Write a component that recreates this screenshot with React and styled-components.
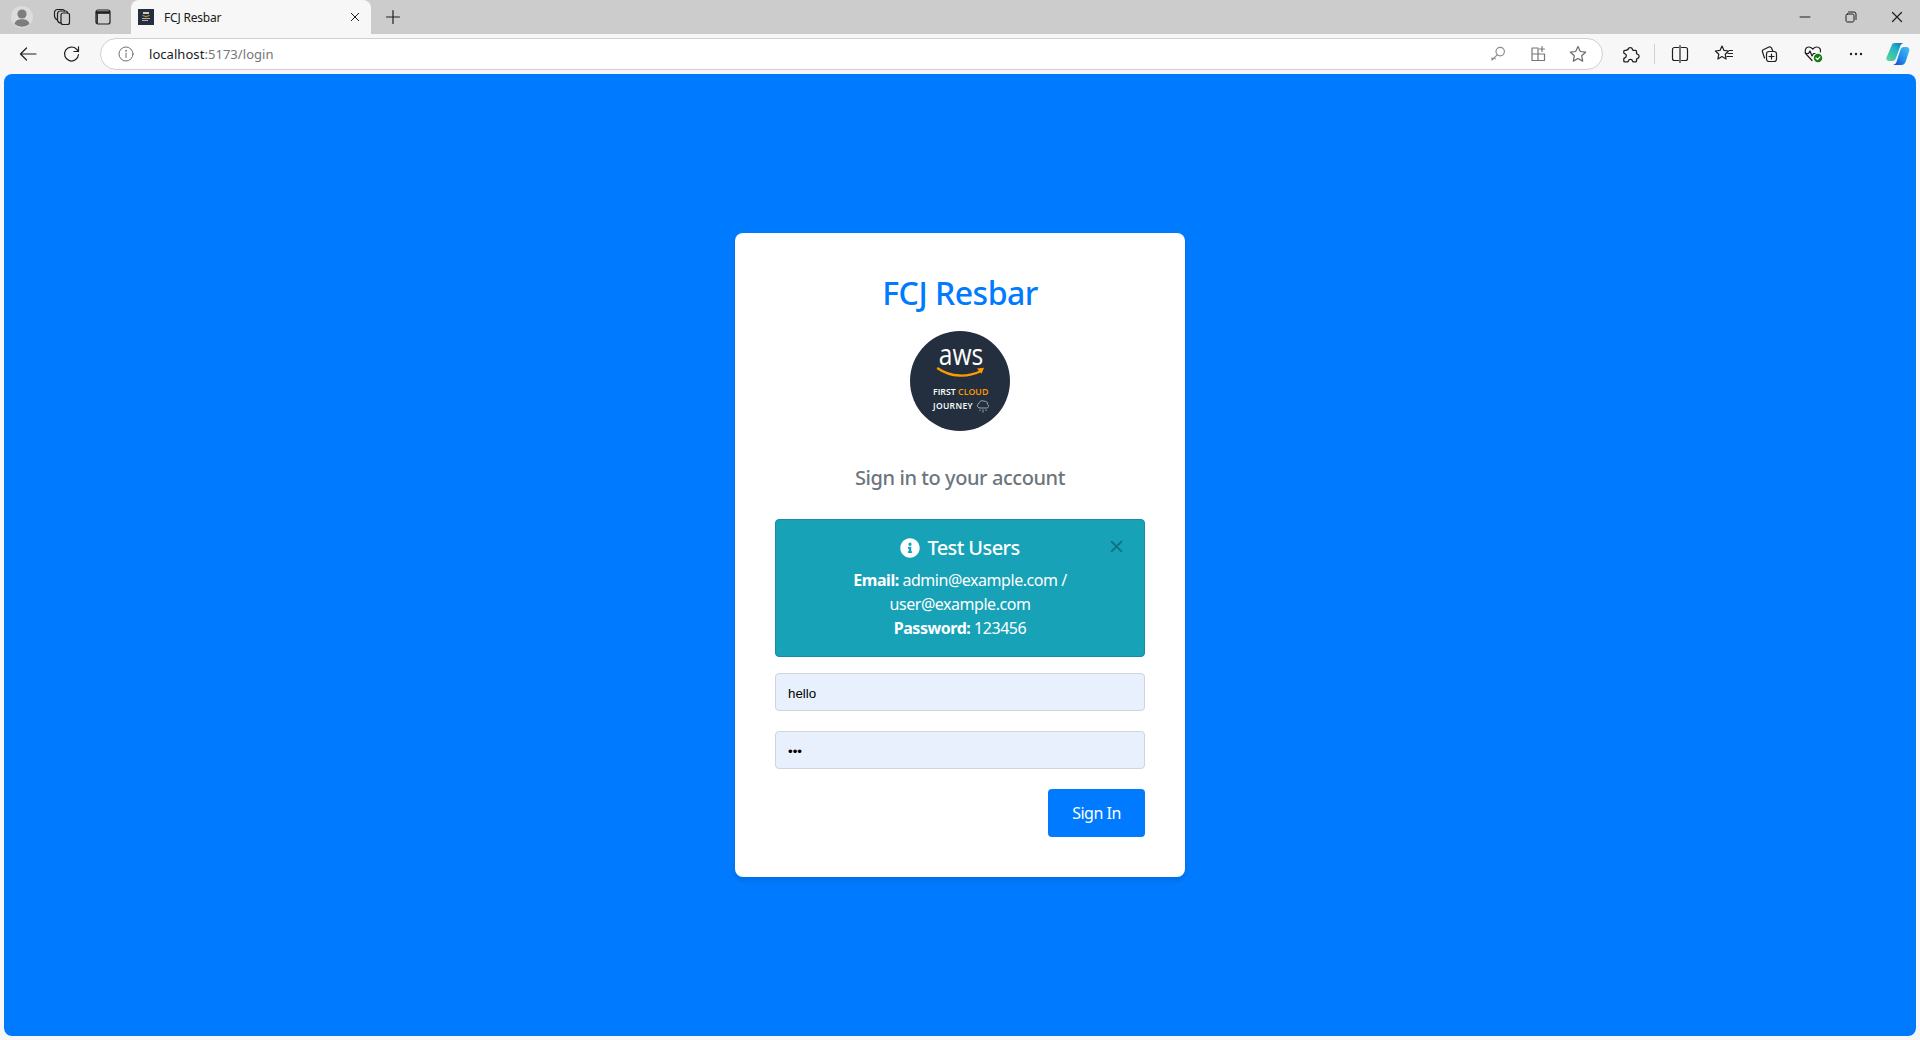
import React from "react";
import styled, { createGlobalStyle } from "styled-components";

const GlobalStyle = createGlobalStyle`
    * { box-sizing: border-box; }
    html, body { margin: 0; padding: 0; height: 100%; }
    body { font-family: "Noto Sans", "Open Sans", sans-serif; overflow: hidden; }
`;

const Page = styled.div`
    width: 1920px;
    height: 1040px;
    display: flex;
    flex-direction: column;
    background-color: #f7f7f7;
`;

const TabStrip = styled.div`
    height: 34px;
    display: flex;
    align-items: stretch;
    padding-left: 4px;
    background-color: #cccccc;
`;

const Tab = styled.div`
    width: 240px;
    margin-left: 9px;
    display: flex;
    align-items: center;
    padding: 0 11px 0 7px;
    background-color: #f7f7f7;
    border-radius: 8px 8px 0 0;
`;

const TabTitle = styled.span`
    flex: 1;
    margin-left: 10px;
    font-size: 12px;
    letter-spacing: -0.2px;
    color: #1a1a1a;
`;

const Slot = styled.div`
    width: ${({ $w }) => $w || 40}px;
    flex-shrink: 0;
    display: flex;
    align-items: center;
    justify-content: center;
`;

const Spacer = styled.div`
    flex: 1;
`;

const Toolbar = styled.div`
    height: 40px;
    display: flex;
    align-items: center;
    padding: 0 4px 0 8px;
`;

const AddressBar = styled.div`
    width: 1503px;
    height: 32px;
    margin: 0 8px 0 8px;
    padding: 0 4px 0 8px;
    display: flex;
    align-items: center;
    background-color: #ffffff;
    border: 1px solid #d0d0d0;
    border-radius: 16px;
`;

const Url = styled.span`
    margin-left: 6px;
    flex: 1;
    font-size: 13px;
    letter-spacing: 0.05px;
    color: #767676;

    b {
        font-weight: 400;
        color: #1a1a1a;
    }
`;

const Divider = styled.div`
    width: 1px;
    height: 20px;
    margin: 0 3px;
    background-color: #d0d0d0;
`;

const Content = styled.main`
    flex: 1;
    margin: 0 4px 4px;
    display: flex;
    align-items: center;
    justify-content: center;
    background-color: #007bff;
    border-radius: 8px;
`;

const Card = styled.div`
    width: 450px;
    padding: 40px;
    display: flex;
    flex-direction: column;
    background-color: #ffffff;
    border-radius: 8px;
    box-shadow: 0 4px 6px rgba(0, 0, 0, 0.1);
`;

const Title = styled.h1`
    margin: 0 0 20px;
    height: 38px;
    font-size: 32px;
    line-height: 40px;
    font-weight: 500;
    letter-spacing: -0.5px;
    text-align: center;
    color: #007bff;
`;

const LogoWrap = styled.div`
    display: flex;
    justify-content: center;
    margin-bottom: 35px;
`;

const Subtitle = styled.h2`
    margin: 0 0 29px;
    font-size: 20px;
    line-height: 24px;
    font-weight: 500;
    letter-spacing: -0.43px;
    text-align: center;
    color: #6c757d;
`;

const Alert = styled.div`
    position: relative;
    padding: 16px;
    margin-bottom: 16px;
    text-align: center;
    color: #ffffff;
    background-color: #17a2b8;
    border: 1px solid #148ea1;
    border-radius: 4px;
`;

const AlertHeading = styled.h4`
    margin: 0 0 8px;
    display: flex;
    align-items: center;
    justify-content: center;
    gap: 7px;
    font-size: 20px;
    line-height: 24px;
    font-weight: 500;
    letter-spacing: -0.6px;
`;

const AlertLine = styled.div`
    font-size: 16px;
    line-height: 24px;
    letter-spacing: -0.46px;

    strong {
        font-weight: 700;
    }
`;

const CloseButton = styled.button`
    position: absolute;
    top: 14px;
    right: 16px;
    width: 24px;
    height: 24px;
    padding: 0;
    display: flex;
    align-items: center;
    justify-content: center;
    background: transparent;
    border: 0;
    opacity: 0.5;
`;

const Input = styled.input`
    display: block;
    width: 100%;
    height: 38px;
    margin-bottom: 20px;
    padding: 2px 12px 0;
    font-family: "Liberation Sans", sans-serif;
    font-size: 13.33px;
    color: #000000;
    background-color: #e8f0fe;
    border: 1px solid #ced4da;
    border-radius: 4px;
    outline: none;
`;

const Actions = styled.div`
    display: flex;
    justify-content: flex-end;
`;

const SubmitButton = styled.button`
    width: 97px;
    height: 48px;
    padding: 0;
    font-family: inherit;
    font-size: 16px;
    letter-spacing: -0.5px;
    color: #ffffff;
    background-color: #007bff;
    border: 0;
    border-radius: 4px;
`;

const Icon = ({ size = 20, vb = 20, children, color = "#1f1f1f", width = 1.2 }) => (
    <svg
        width={size}
        height={size}
        viewBox={`0 0 ${vb} ${vb}`}
        fill="none"
        stroke={color}
        strokeWidth={width}
        strokeLinecap="round"
        strokeLinejoin="round"
    >
        {children}
    </svg>
);

const ProfileIcon = () => (
    <svg width="22" height="22" viewBox="0 0 22 22">
        <circle cx="11" cy="11" r="11" fill="#dcdcdc" />
        <circle cx="11" cy="8" r="4.6" fill="#7d7d7d" />
        <path d="M3.6 18c.6-3.4 3.6-4.8 7.4-4.8s6.8 1.4 7.4 4.8a11 11 0 0 1-14.8 0z" fill="#7d7d7d" />
    </svg>
);

const CollectionsTabIcon = () => (
    <Icon>
        <rect x="9" y="6" width="8.5" height="11.5" rx="2" />
        <path d="M9 16c-2 0-3-1-3.5-2.5V7a3 3 0 0 1 3-3h5a2 2 0 0 1 2 2" />
        <path d="M5.5 13c-2-1-3-2-3-4V6a3 3 0 0 1 3-3.5h5a2 2 0 0 1 2 1.5" />
    </Icon>
);

const VerticalTabsIcon = () => (
    <Icon>
        <rect x="3" y="3" width="14" height="14" rx="2" />
        <path d="M3 5.5h14" strokeWidth="2.6" strokeLinecap="butt" />
        <path d="M4.2 6v10.5" strokeWidth="1.4" strokeLinecap="butt" />
    </Icon>
);

const FavIcon = () => (
    <svg width="16" height="16" viewBox="0 0 16 16">
        <rect width="16" height="16" fill="#232f3e" />
        <rect x="5" y="3" width="6" height="2" fill="#c9ccd0" />
        <path d="M4.5 6.5q3.5 2 7 0" stroke="#ff9900" strokeWidth="1" fill="none" />
        <rect x="4" y="9" width="8" height="1" fill="#aeb3ba" />
        <rect x="4" y="11" width="6" height="1" fill="#aeb3ba" />
    </svg>
);

const CloseIcon = ({ size = 12, color = "#1f1f1f", width = 1.2 }) => (
    <Icon size={size} vb={12} color={color} width={width}>
        <path d="M1.5 1.5l9 9M10.5 1.5l-9 9" />
    </Icon>
);

const PlusIcon = () => (
    <Icon size={16} vb={16}>
        <path d="M8 1.5v13M1.5 8h13" />
    </Icon>
);

const BackIcon = () => (
    <Icon>
        <path d="M18 10H2.5M8.5 4l-6 6 6 6" />
    </Icon>
);

const RefreshIcon = () => (
    <Icon>
        <path d="M16.5 10.5a7 7 0 1 1-1.8-5.2L16.5 7.5M16.5 2.8v4.7h-4.6" />
    </Icon>
);

const InfoOutlineIcon = () => (
    <Icon size={16} vb={16} color="#6f6f6f" width={1}>
        <circle cx="8" cy="8" r="7" />
        <path d="M8 7v4.5" />
        <circle cx="8" cy="4.8" r=".4" />
    </Icon>
);

const KeyIcon = () => (
    <Icon size={16} vb={16} color="#8c8c8c">
        <circle cx="10.2" cy="5.6" r="4.2" />
        <path d="M7.2 8.8 2 14M2 14v-2.2M4.2 11.8l1 1" />
    </Icon>
);

const AppsIcon = () => (
    <Icon size={18} vb={18} color="#767676">
        <path d="M9 3H3v12.5h12.5V9H3M9 3v12.5M13 1.5v5M10.5 4h5" />
    </Icon>
);

const StarIcon = () => (
    <Icon size={18} vb={18} color="#6b6b6b">
        <path d="M9 1.6l2.3 4.9 5.3.7-3.9 3.6 1 5.3L9 13.5l-4.7 2.6 1-5.3-3.9-3.6 5.3-.7z" />
    </Icon>
);

const PuzzleIcon = () => (
    <Icon size={17} vb={17} width={1.3}>
        <path d="M5 3.5a2.3 2.3 0 0 1 4.5 0c0 .5.4.8.8.8h2.2a1 1 0 0 1 1 1v2c0 .5.3.8.8.8a2.3 2.3 0 0 1 0 4.5c-.5 0-.8.3-.8.8v1.5a1 1 0 0 1-1 1h-2c-.5 0-.8-.3-.9-.8a2.2 2.2 0 0 0-4.3 0c-.1.5-.4.8-.9.8H1.800a1 1 0 0 1-1-1v-2c0-.5.3-.8.8-.9a2.2 2.2 0 0 0 0-4.3c-.5-.1-.8-.4-.8-.9V5.300a1 1 0 0 1 1-1h1.600c.5 0 .8-.3.8-.8z" />
    </Icon>
);

const SplitIcon = () => (
    <Icon>
        <path d="M8.5 3.5h-4a2 2 0 0 0-2 2v9a2 2 0 0 0 2 2h4M11.5 3.5h4a2 2 0 0 1 2 2v9a2 2 0 0 1-2 2h-4M10 1.500v17" />
    </Icon>
);

const FavoritesIcon = () => (
    <Icon>
        <path d="M8 2l2 4.400 4.600.6-3.400 3.200.9 4.800L8 12.600 3.900 15l.9-4.800L1.400 7 6 6.400zM14 9.500h4.500M13 12.500h5.500M15.500 6.500h3" />
    </Icon>
);

const CollectionsIcon = () => (
    <Icon>
        <rect x="6.500" y="7.500" width="10" height="10" rx="2.500" />
        <path d="M11.500 10v5M9 12.500h5M4.500 14 2.500 8a2 2 0 0 1 1.200-2.500L9 3a2 2 0 0 1 2.500 1L13 7.500" />
    </Icon>
);

const HealthIcon = () => (
    <svg width="20" height="20" viewBox="0 0 20 20" fill="none" stroke="#1f1f1f" strokeWidth="1.2" strokeLinejoin="round" strokeLinecap="round">
        <path d="M9 16.500 3.500 10.500C1 8 2.200 3 5.800 3c1.800 0 3 .9 4 2.200 1-1.300 2.200-2.200 4-2.200 3 0 4.200 2.800 3.500 5" />
        <path d="M2.500 9.500h3l1.500-2.500 2 5 1.500-2.500h1.500" />
        <circle cx="15" cy="14" r="4.200" fill="#107c10" stroke="none" />
        <path d="M13 14l1.500 1.500 2.500-2.700" stroke="#ffffff" />
    </svg>
);

const DotsIcon = () => (
    <svg width="14" height="4" viewBox="0 0 14 4" fill="#1f1f1f">
        <circle cx="2" cy="2" r="1.2" />
        <circle cx="7" cy="2" r="1.2" />
        <circle cx="12" cy="2" r="1.2" />
    </svg>
);

const CopilotIcon = () => (
    <svg width="24" height="24" viewBox="0 0 24 24">
        <defs>
            <linearGradient id="copilotA" x1="1" y1="0" x2="0" y2="1">
                <stop offset="0" stopColor="#0f6fb5" />
                <stop offset="0.4" stopColor="#22b4c8" />
                <stop offset="1" stopColor="#5fd88a" />
            </linearGradient>
            <linearGradient id="copilotB" x1="1" y1="0" x2="0" y2="1">
                <stop offset="0" stopColor="#45c0f5" />
                <stop offset="0.6" stopColor="#1f86e8" />
                <stop offset="1" stopColor="#1c3fc0" />
            </linearGradient>
        </defs>
        <path d="M14.500 7.500C15 6 16.300 5 18 5h2.500c2 0 3.400 1.800 2.800 3.700L19.500 20c-.6 2-2.300 3-4 3H7c1.700-.3 2.900-1.500 3.500-3z" fill="url(#copilotB)" />
        <path d="M6 2.500C6.500 1.500 7.500 1 9 1h8.500c-1.500.3-2.600 1.500-3.200 3L10 16c-.6 2-1.800 3-3.500 3H3c-2 0-3.200-1.800-2.500-3.600z" fill="url(#copilotA)" />
    </svg>
);

const MinimizeIcon = () => (
    <Icon size={12} vb={12} width={1}>
        <path d="M1 6h10" />
    </Icon>
);

const RestoreIcon = () => (
    <Icon size={12} vb={12} width={1}>
        <rect x="1" y="3" width="8" height="8" rx="1.5" />
        <path d="M3.500 1h5.500a2 2 0 0 1 2 2v5.500" />
    </Icon>
);

const InfoCircle = () => (
    <svg width="20" height="20" viewBox="0 0 512 512" fill="#ffffff">
        <path d="M256 8C119 8 8 119 8 256s111 248 248 248 248-111 248-248S393 8 256 8zm0 110a42 42 0 1 1 0 84 42 42 0 0 1 0-84zm56 254c0 7-5 12-12 12h-88c-7 0-12-5-12-12v-24c0-7 5-12 12-12h12v-64h-12c-7 0-12-5-12-12v-24c0-7 5-12 12-12h64c7 0 12 5 12 12v100h12c7 0 12 5 12 12z" />
    </svg>
);

const AwsLogo = () => (
    <svg width="100" height="100" viewBox="0 0 100 100">
        <circle cx="50" cy="50" r="50" fill="#232f3e" />
        <text
            transform="translate(51 34) scale(.85 1)"
            textAnchor="middle"
            fontFamily="Open Sans, sans-serif"
            fontSize="29"
            fill="#ffffff"
        >
            aws
        </text>
        <path d="M28 37.500c13 9 30 9 43 2.500" stroke="#ff9900" strokeWidth="2.4" fill="none" strokeLinecap="round" />
        <path d="M67 37.500l7-.8-2.500 6z" fill="#ff9900" />
        <text x="23" y="64" fontFamily="Open Sans, sans-serif" fontSize="8.8" fontWeight="600" fill="#ffffff">
            FIRST <tspan fill="#ff9900">CLOUD</tspan>
        </text>
        <text x="23" y="77.500" fontFamily="Open Sans, sans-serif" fontSize="8.5" fontWeight="600" letterSpacing=".35" fill="#ffffff">
            JOURNEY
        </text>
        <path
            d="M70 77c-3 0-3.500-4-1-4.500.3-2.500 3-3.500 5-2.200 2-.5 3.800 1 3.500 3 2 1 1 3.700-1 3.700z"
            stroke="#d5d7da"
            strokeWidth="0.7"
            fill="none"
        />
        <path d="M70 78.500v1.500M73 78.500v3M76 78.500v1.500" stroke="#d5d7da" strokeWidth="0.7" />
    </svg>
);

const App = () => {
    const handleSubmit = (e) => {
        e.preventDefault();
    };

    return (
        <Page>
            <GlobalStyle />
            <TabStrip>
                <Slot $w={36}><ProfileIcon /></Slot>
                <Slot $w={44}><CollectionsTabIcon /></Slot>
                <Slot $w={38}><VerticalTabsIcon /></Slot>
                <Tab>
                    <FavIcon />
                    <TabTitle>FCJ Resbar</TabTitle>
                    <CloseIcon size={10} />
                </Tab>
                <Slot $w={44}><PlusIcon /></Slot>
                <Spacer />
                <Slot $w={46}><MinimizeIcon /></Slot>
                <Slot $w={46}><RestoreIcon /></Slot>
                <Slot $w={46}><CloseIcon /></Slot>
            </TabStrip>
            <Toolbar>
                <Slot><BackIcon /></Slot>
                <Slot $w={4} />
                <Slot><RefreshIcon /></Slot>
                <AddressBar>
                    <Slot $w={34}><InfoOutlineIcon /></Slot>
                    <Url><b>localhost</b>:5173/login</Url>
                    <Slot><KeyIcon /></Slot>
                    <Slot><AppsIcon /></Slot>
                    <Slot><StarIcon /></Slot>
                </AddressBar>
                <Slot><PuzzleIcon /></Slot>
                <Divider />
                <Slot $w={44}><SplitIcon /></Slot>
                <Slot $w={44}><FavoritesIcon /></Slot>
                <Slot $w={48}><CollectionsIcon /></Slot>
                <Slot $w={38}><HealthIcon /></Slot>
                <Slot $w={48}><DotsIcon /></Slot>
                <Slot $w={36}><CopilotIcon /></Slot>
            </Toolbar>
            <Content>
                <Card>
                    <Title>FCJ Resbar</Title>
                    <LogoWrap><AwsLogo /></LogoWrap>
                    <Subtitle>Sign in to your account</Subtitle>
                    <Alert>
                        <CloseButton type="button" aria-label="Close">
                            <CloseIcon size={13} color="#0b3d47" width={1.6} />
                        </CloseButton>
                        <AlertHeading><InfoCircle /> Test Users</AlertHeading>
                        <AlertLine><strong>Email:</strong> admin@example.com /</AlertLine>
                        <AlertLine>user@example.com</AlertLine>
                        <AlertLine><strong>Password:</strong> 123456</AlertLine>
                    </Alert>
                    <form onSubmit={handleSubmit}>
                        <Input type="text" defaultValue="hello" />
                        <Input type="password" defaultValue="123" />
                        <Actions>
                            <SubmitButton type="submit">Sign In</SubmitButton>
                        </Actions>
                    </form>
                </Card>
            </Content>
        </Page>
    );
};

export default App;
